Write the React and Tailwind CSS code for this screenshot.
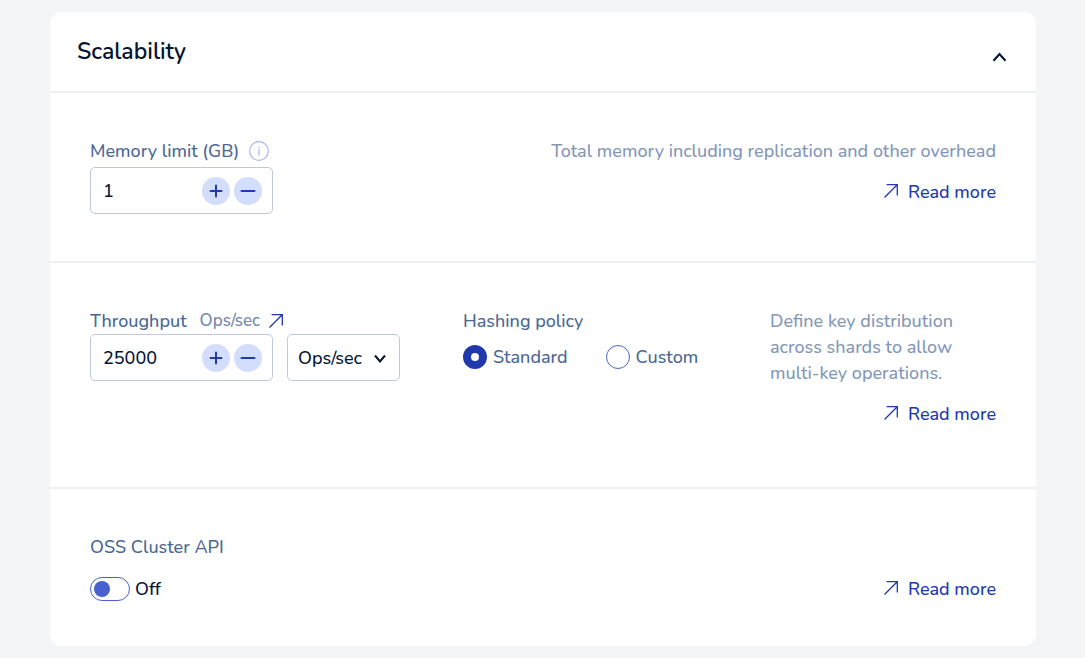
import { useState } from 'react'

function ArrowIcon({ className = '' }) {
  return (
    <svg className={className} width="14" height="14" viewBox="0 0 14 14" fill="none" stroke="currentColor" strokeWidth="1.3" aria-hidden="true">
      <path d="M0.5 13.5 13.2 0.8M2.6 0.7H13.3V11.4" />
    </svg>
  )
}

function InfoIcon() {
  return (
    <svg width="20" height="20" viewBox="0 0 20 20" fill="none" stroke="currentColor" aria-hidden="true">
      <circle cx="10" cy="10" r="9.3" strokeWidth="1.2" />
      <path d="M10 8.3V14.5M10 5.5V6.8" strokeWidth="1.3" />
    </svg>
  )
}

function ReadMore({ topic }) {
  return (
    <a href="#docs" aria-label={`Read more about ${topic}`} className="flex items-center gap-[10px] self-end whitespace-nowrap text-[#2139ad]">
      <ArrowIcon className="mb-[2px]" />
      Read more
    </a>
  )
}

function StepButton({ label, path, onClick }) {
  return (
    <button type="button" aria-label={label} onClick={onClick} className="flex size-7 shrink-0 items-center justify-center rounded-full bg-[#d3defc] text-[#2139ad]">
      <svg width="16" height="16" viewBox="0 0 16 16" fill="none" stroke="currentColor" strokeWidth="2" strokeLinecap="round" aria-hidden="true">
        <path d={path} />
      </svg>
    </button>
  )
}

function Stepper({ id, initial, step }) {
  const [value, setValue] = useState(initial)
  return (
    <div className="flex h-[47px] w-[183px] items-center gap-1 rounded-[5px] border border-[#bfc8dc] pr-[10px] pl-3">
      <input
        id={id}
        type="text"
        inputMode="numeric"
        value={value}
        onChange={(e) => setValue(Number(e.target.value) || 0)}
        className="min-w-0 flex-1 bg-transparent text-[#051532] outline-none"
      />
      <StepButton label="Increase" path="M2.5 8H13.5M8 2.5V13.5" onClick={() => setValue(value + step)} />
      <StepButton label="Decrease" path="M1.5 8H14.5" onClick={() => setValue(Math.max(0, value - step))} />
    </div>
  )
}

function PolicyOption({ value, children, defaultChecked }) {
  return (
    <label className="flex items-center gap-[6px]">
      <input
        type="radio"
        name="hashing"
        value={value}
        defaultChecked={defaultChecked}
        className="size-6 appearance-none rounded-full border border-[#4762cc] bg-white checked:border-8 checked:border-[#2139ad]"
      />
      {children}
    </label>
  )
}

export default function App() {
  const [open, setOpen] = useState(true)
  const [oss, setOss] = useState(false)
  return (
    <main className="min-h-screen bg-[#f4f5f7] py-3 pr-[49px] pl-[50px] font-['Nunito','Lato',sans-serif] text-[18px] leading-[26px] font-medium text-[#4b6894]">
      <section className="rounded-xl bg-white">
        <header className="flex h-[81px] items-center justify-between border-b-2 border-[#eeeff1] pr-[29px] pl-[27px] text-[#051532]">
          <h2 className="text-[23px] font-semibold">Scalability</h2>
          <button type="button" aria-label="Toggle section" aria-expanded={open} onClick={() => setOpen(!open)} className="pt-[10px]">
            <svg width="15" height="12" viewBox="0 0 15 12" fill="none" stroke="currentColor" strokeWidth="2.1" aria-hidden="true">
              <path d="M1.5 9.8 7.5 3 13.5 9.8" />
            </svg>
          </button>
        </header>
        {open && (
          <>
            <div className="flex justify-between border-b-2 border-[#eeeff1] px-10 pt-[45px] pb-[47px]">
              <div>
                <div className="mb-[3px] flex items-center gap-[10px]">
                  <label htmlFor="memory">Memory limit (GB)</label>
                  <button type="button" aria-label="About memory limit" className="text-[#a5b8f7]">
                    <InfoIcon />
                  </button>
                </div>
                <Stepper id="memory" initial={1} step={1} />
              </div>
              <div className="flex flex-col gap-[15px] text-[#8497b8]">
                <p>Total memory including replication and other overhead</p>
                <ReadMore topic="memory" />
              </div>
            </div>
            <div className="grid grid-cols-[373fr_307fr_226fr] border-b-2 border-[#eeeff1] px-10 pt-[45px] pb-[60px]">
              <div>
                <div className="flex items-center">
                  <label htmlFor="throughput">Throughput</label>
                  <a href="#ops" className="flex items-center gap-[9px] pl-[13px] text-[17px] leading-[26px] text-[#7288ad]">
                    Ops/sec
                    <ArrowIcon className="text-[#2139ad]" />
                  </a>
                </div>
                <div className="flex gap-[14px]">
                  <Stepper id="throughput" initial={25000} step={1000} />
                  <div className="relative">
                    <select aria-label="Throughput unit" className="h-[47px] w-[113px] appearance-none rounded-[5px] border border-[#bfc8dc] bg-white pl-[10px] text-[#051532]">
                      <option>Ops/sec</option>
                      <option>Shards</option>
                    </select>
                    <svg className="pointer-events-none absolute top-5 right-[14px] text-[#051532]" width="12" height="10" viewBox="0 0 12 10" fill="none" stroke="currentColor" strokeWidth="2" aria-hidden="true">
                      <path d="M1 1.5 6 7.5 11 1.5" />
                    </svg>
                  </div>
                </div>
              </div>
              <fieldset>
                <legend>Hashing policy</legend>
                <div className="flex gap-[38px] pt-[10px]">
                  <PolicyOption value="standard" defaultChecked>Standard</PolicyOption>
                  <PolicyOption value="custom">Custom</PolicyOption>
                </div>
              </fieldset>
              <div className="flex flex-col gap-[15px] text-[#8497b8]">
                <p>Define key distribution across shards to allow multi-key operations.</p>
                <ReadMore topic="hashing policy" />
              </div>
            </div>
            <div className="flex items-end justify-between px-10 pt-[45px] pb-[44px]">
              <div className="flex flex-col gap-4">
                <label htmlFor="oss">OSS Cluster API</label>
                <div className="flex items-center gap-[5px] text-[#051532]">
                  <input
                    id="oss"
                    type="checkbox"
                    role="switch"
                    checked={oss}
                    onChange={(e) => setOss(e.target.checked)}
                    className="flex h-6 w-10 appearance-none items-center rounded-full border border-[#4762cc] px-[3px] before:size-4 before:rounded-full before:bg-[#4762cc] checked:justify-end"
                  />
                  {oss ? 'On' : 'Off'}
                </div>
              </div>
              <ReadMore topic="the OSS Cluster API" />
            </div>
          </>
        )}
      </section>
    </main>
  )
}
